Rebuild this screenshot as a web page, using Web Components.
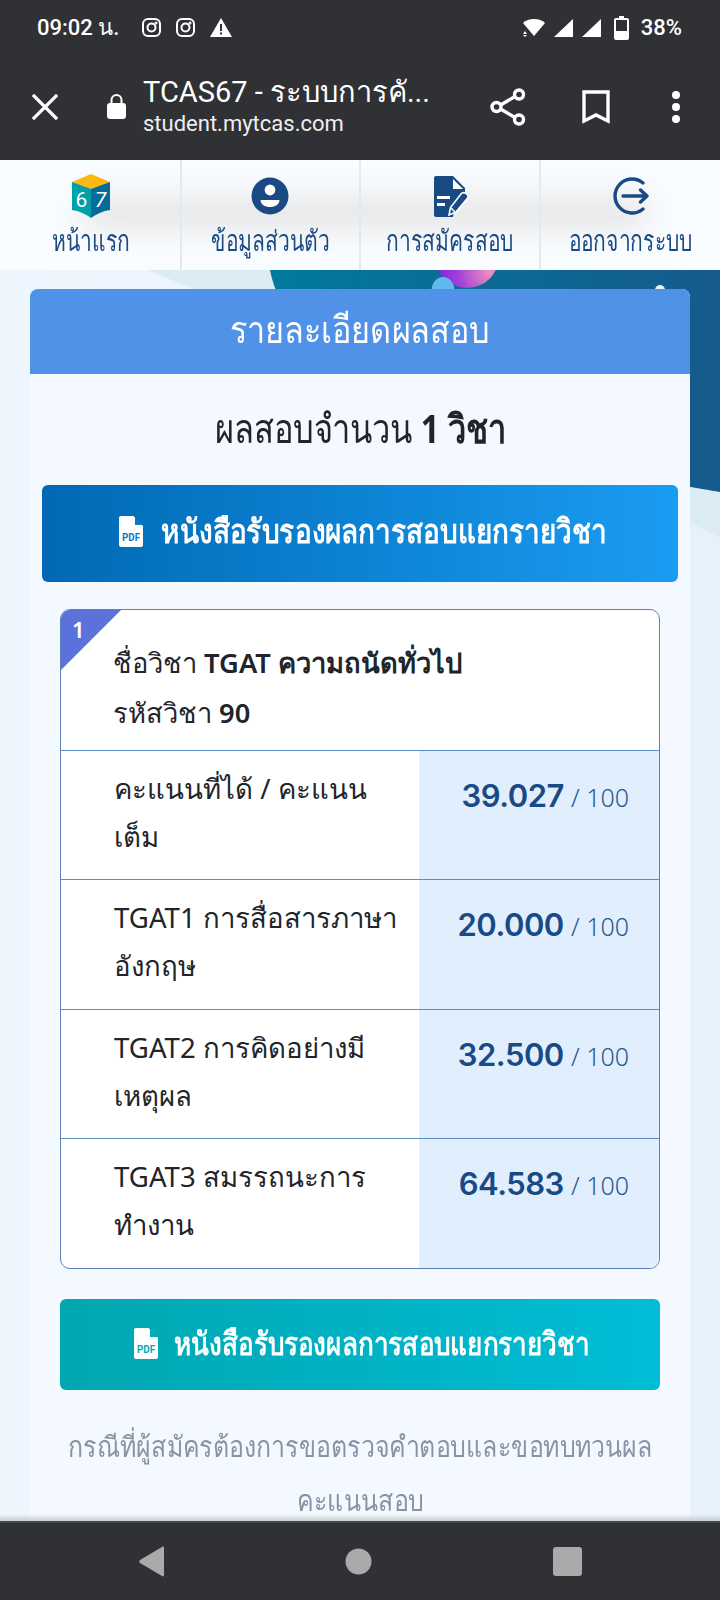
<!DOCTYPE html>
<html lang="th">
<head>
<meta charset="utf-8">
<title>TCAS67</title>
<style>
  html, body { margin: 0; padding: 0; }
  body { width: 720px; height: 1600px; overflow: hidden; display: flex; flex-direction: column; font-family: "Noto Sans", sans-serif; background: #303135; }
</style>
</head>
<body>
<phone-top></phone-top>
<nav-tabs>
  <nav-tab label="หน้าแรก" icon="book"></nav-tab>
  <nav-tab label="ข้อมูลส่วนตัว" icon="user"></nav-tab>
  <nav-tab label="การสมัครสอบ" icon="form"></nav-tab>
  <nav-tab label="ออกจากระบบ" icon="logout"></nav-tab>
</nav-tabs>
<page-body>
  <result-card heading="รายละเอียดผลสอบ">
    <h-count>ผลสอบจำนวน <b>1 วิชา</b></h-count>
    <pdf-button kind="blue">หนังสือรับรองผลการสอบแยกรายวิชา</pdf-button>
    <score-table no="1" subject="TGAT ความถนัดทั่วไป" code="90">
      <score-row score="39.027">คะแนนที่ได้ / คะแนน<br>เต็ม</score-row>
      <score-row score="20.000">TGAT1 การสื่อสารภาษา<br>อังกฤษ</score-row>
      <score-row score="32.500">TGAT2 การคิดอย่างมี<br>เหตุผล</score-row>
      <score-row score="64.583">TGAT3 สมรรถนะการ<br>ทำงาน</score-row>
    </score-table>
    <pdf-button kind="teal">หนังสือรับรองผลการสอบแยกรายวิชา</pdf-button>
    <foot-note>
      <span>กรณีที่ผู้สมัครต้องการขอตรวจคำตอบและขอทบทวนผล</span>
      <span>คะแนนสอบ</span>
    </foot-note>
  </result-card>
</page-body>
<phone-nav></phone-nav>

<script>
const ICONS = {
  book: `<svg width="38" height="44" viewBox="0 0 38 44">
    <path d="M19 0 38 8 19 16 0 8Z" fill="#fdb813"/>
    <path d="M0 8 19 15V44C14 40 7 37 0 36Z" fill="#00a0a8"/>
    <path d="M38 8 19 15V44C24 40 31 37 38 36Z" fill="#046b9c"/>
    <text x="9.500" y="33" font-size="21" font-family="Roboto" fill="#fff" text-anchor="middle">6</text>
    <text x="28.500" y="33" font-size="21" font-family="Roboto" font-style="italic" fill="#fff" text-anchor="middle">7</text>
  </svg>`,
  user: `<svg width="38" height="38" viewBox="0 0 38 38">
    <circle cx="19" cy="19" r="18.5" fill="#1a4a84"/>
    <circle cx="19" cy="13" r="5.400" fill="#fff"/>
    <path d="M9.500 23h19c0 4.600-4.600 7-9.500 7s-9.500-2.400-9.500-7Z" fill="#fff"/>
  </svg>`,
  form: `<svg width="36" height="41" viewBox="0 0 36 41" style="margin-left:5px">
    <path d="M2 0H19L31 12V20L20 34 19 41H2A2 2 0 0 1 0 39V2A2 2 0 0 1 2 0Z" fill="#1a4a84"/>
    <path d="M19 3 29 13H19Z" fill="#fff"/>
    <path d="M3 20H16V23H3ZM3 27H11V30H3Z" fill="#fff"/>
    <path d="M15 39 16.500 31.500 27 18C29.500 15 35 18 34 21.500L22 36Z" fill="#1a4a84" stroke="#fff" stroke-width="1.600"/>
    <path d="M17 32 21 36" stroke="#fff" stroke-width="1.600"/>
  </svg>`,
  logout: `<svg width="38" height="38" viewBox="0 0 38 38" fill="none" stroke="#1a4a84" stroke-width="3.400" stroke-linecap="round" stroke-linejoin="round">
    <path d="M32 6A17 17 0 1 0 32 32"/>
    <path d="M12 19H36M29.500 13 36 19 29.500 25"/>
  </svg>`
};

const PDF = color => `<svg width="24" height="31" viewBox="0 0 24 31">
  <path d="M2 0H14.500L24 10V29A2 2 0 0 1 22 31H2A2 2 0 0 1 0 29V2A2 2 0 0 1 2 0Z" fill="#fff"/>
  <path d="M16 1 23.500 9H16Z" fill="${color}"/>
  <text x="12" y="25" font-size="11" font-weight="700" font-family="Roboto" fill="${color}" text-anchor="middle" textLength="18" lengthAdjust="spacingAndGlyphs">PDF</text>
</svg>`;

class PhoneTop extends HTMLElement {
  connectedCallback() {
    this.attachShadow({ mode: 'open' });
    this.shadowRoot.innerHTML = `
      <style>
        :host { display: block; background: #303135; color: #fff; height: 160px; flex: none; }
        .status { height: 53px; box-sizing: border-box; padding: 2px 38px 0 37px; display: flex; align-items: center; font-family: Roboto, sans-serif; font-size: 22px; font-weight: 500; }
        .status .time { margin-right: 8px; white-space: nowrap; }
        .left { display: flex; align-items: center; gap: 15px; flex: 1; }
        .right { display: flex; align-items: center; }
        .bar { height: 107px; display: flex; align-items: center; padding: 0 0 0 32px; }
        .close { margin-right: 49px; display: flex; }
        .lock { margin-right: 17px; display: flex; }
        .titles { width: 300px; margin-right: 47px; margin-top: 2px; }
        .t1 { font-size: 29px; line-height: 36px; font-family: Roboto, "Noto Sans", sans-serif; white-space: nowrap; margin-top: -4px; }
        .t2 { font-size: 22px; line-height: 28px; font-family: Roboto, sans-serif; color: #eee; white-space: nowrap; }
        .acts { display: flex; align-items: center; }
      </style>
      <div class="status">
        <div class="left">
          <span class="time">09:02 น.</span>
          <svg width="19" height="19" viewBox="0 0 19 19" fill="none" stroke="#fff" stroke-width="2"><rect x="1" y="1" width="17" height="17" rx="5"/><circle cx="9.500" cy="9.500" r="4"/><circle cx="14" cy="5" r=".6"/></svg>
          <svg width="19" height="19" viewBox="0 0 19 19" fill="none" stroke="#fff" stroke-width="2"><rect x="1" y="1" width="17" height="17" rx="5"/><circle cx="9.500" cy="9.500" r="4"/><circle cx="14" cy="5" r=".6"/></svg>
          <svg width="22" height="19" viewBox="0 0 22 19"><path d="M11 0 22 19H0Z" fill="#fff"/><path d="M10 6h2v7h-2ZM10 14.500h2v2h-2Z" fill="#303135"/></svg>
        </div>
        <div class="right">
          <svg width="24" height="19" viewBox="0 0 24 19" style="margin-right:8px"><path d="M1 5C6-.5 18-.5 23 5L12 18 9 14.500Z" fill="#fff"/><path d="M3 13 5 16H1ZM3 19 1 17H5Z" fill="#fff"/></svg>
          <svg width="19" height="18" viewBox="0 0 19 18" style="margin-right:9px"><path d="M19 0V18H0Z" fill="#fff"/></svg>
          <svg width="19" height="18" viewBox="0 0 19 18" style="margin-right:13px"><path d="M19 0V18H0Z" fill="#fff"/></svg>
          <svg width="15" height="24" viewBox="0 0 15 24" style="margin-right:12px"><path d="M5 0h5v2h3a2 2 0 0 1 2 2v18a2 2 0 0 1-2 2H2a2 2 0 0 1-2-2V4a2 2 0 0 1 2-2h3Z" fill="#fff"/><rect x="2" y="4" width="11" height="11" fill="#303135"/></svg>
          <span>38%</span>
        </div>
      </div>
      <div class="bar">
        <span class="close"><svg width="26" height="26" viewBox="0 0 26 26" stroke="#fff" stroke-width="3.200" stroke-linecap="square"><path d="M2 2 24 24M24 2 2 24"/></svg></span>
        <span class="lock"><svg width="19" height="25" viewBox="0 0 19 25"><path d="M4.500 10V6a5 5 0 0 1 10 0v4" fill="none" stroke="#fff" stroke-width="2"/><rect y="9" width="19" height="16" rx="3" fill="#fff"/></svg></span>
        <div class="titles">
          <div class="t1">TCAS67 - ระบบการคั...</div>
          <div class="t2">student.mytcas.com</div>
        </div>
        <div class="acts">
          <svg width="36" height="38" viewBox="0 0 36 38" fill="none" stroke="#fff" stroke-width="3.400" style="margin-right:56px"><circle cx="6.500" cy="19" r="4.500"/><circle cx="29" cy="6.500" r="4.500"/><circle cx="29" cy="31.500" r="4.500"/><path d="M10.500 17 25 8.500M10.500 21 25 29.500"/></svg>
          <svg width="28" height="34" viewBox="0 0 28 34" fill="none" stroke="#fff" stroke-width="3.400" style="margin-right:61px"><path d="M2 2H26V31L14 25 2 31Z"/></svg>
          <svg width="10" height="34" viewBox="0 0 10 34" fill="#fff"><circle cx="5" cy="5" r="4"/><circle cx="5" cy="17" r="4"/><circle cx="5" cy="29" r="4"/></svg>
        </div>
      </div>`;
  }
}

class NavTabs extends HTMLElement {
  connectedCallback() {
    this.attachShadow({ mode: 'open' });
    this.shadowRoot.innerHTML = `
      <style>
        :host { display: flex; flex: none; height: 110px; background: #fafdff; padding-left: 2px; box-sizing: border-box; position: relative; z-index: 2; overflow: hidden; }
        .glow { position: absolute; left: 80px; right: 70px; top: 38px; height: 30px; background: #e2e2e2; filter: blur(16px); border-radius: 15px; }
      </style>
      <div class="glow"></div>
      <slot></slot>`;
  }
}

class NavTab extends HTMLElement {
  connectedCallback() {
    this.attachShadow({ mode: 'open' });
    this.shadowRoot.innerHTML = `
      <style>
        :host { display: flex; flex-direction: column; align-items: center; width: 180px; box-sizing: border-box; border-right: 2px solid #e6e9ec; padding-top: 14px; position: relative; }
        :host(:last-child) { border-right: 0; }
        .ic { height: 44px; display: flex; align-items: center; }
        .lb { margin-top: 4px; font-size: 29px; line-height: 36px; color: #1a4a84; white-space: nowrap; transform: scaleX(.725); }
      </style>
      <div class="ic">${ICONS[this.getAttribute('icon')]}</div>
      <div class="lb">${this.getAttribute('label')}</div>`;
  }
}

class PageBody extends HTMLElement {
  connectedCallback() {
    this.attachShadow({ mode: 'open' });
    this.shadowRoot.innerHTML = `
      <style>
        :host { display: block; flex: 1; min-height: 0; position: relative; overflow: hidden; background: linear-gradient(90deg, #eef6fe, #e6f1fb); padding: 19px 30px 0; }
        .deco { position: absolute; left: 0; top: 0; }
        .fade { position: absolute; left: 0; right: 0; bottom: 0; height: 7px; background: linear-gradient(#e8ebee00, #c9ccd0); z-index: 3; }
        .in { position: relative; }
      </style>
      <svg class="deco" width="720" height="300" viewBox="0 0 720 300">
        <defs>
          <linearGradient id="deep" x1="0" y1="0" x2="1" y2="0">
            <stop offset="0" stop-color="#017a9e"/><stop offset="1" stop-color="#155a8c"/>
          </linearGradient>
          <radialGradient id="orb" cx=".85" cy=".75" r=".9">
            <stop offset="0" stop-color="#f090c0"/><stop offset=".55" stop-color="#a040d8"/><stop offset="1" stop-color="#7a20e0"/>
          </radialGradient>
        </defs>
        <path d="M147 0H720V267C500 165 300 60 147 0Z" fill="#dcecf5"/>
        <path d="M270 0H720V222C690 216 300 160 270 0Z" fill="url(#deep)"/>
        <circle cx="467" cy="-14" r="32" fill="url(#orb)"/>
        <ellipse cx="443" cy="21" rx="11.500" ry="14" fill="#5fb8f0"/>
        <circle cx="660" cy="20" r="5" fill="#e8f0f8"/>
      </svg>
      <div class="in"><slot></slot></div>
      <div class="fade"></div>`;
  }
}

class ResultCard extends HTMLElement {
  connectedCallback() {
    this.attachShadow({ mode: 'open' });
    this.shadowRoot.innerHTML = `
      <style>
        :host { display: block; background: #f4f9ff; border-radius: 8px 8px 0 0; overflow: hidden; height: 1300px; }
        .head { height: 85px; box-sizing: border-box; padding-bottom: 6px; background: #4f92e8; color: #fff; line-height: 79px; text-align: center; }
        .head span { display: inline-block; font-size: 38px; transform: scaleX(.853); white-space: nowrap; }
      </style>
      <div class="head"><span>${this.getAttribute('heading')}</span></div>
      <slot></slot>`;
  }
}

class HCount extends HTMLElement {
  connectedCallback() {
    this.attachShadow({ mode: 'open' });
    this.shadowRoot.innerHTML = `
      <style>
        :host { display: block; height: 111px; line-height: 107px; text-align: center; color: #212529; }
        span { display: inline-block; font-size: 40px; transform: scaleX(.816); white-space: nowrap; }
      </style>
      <span><slot></slot></span>`;
  }
}

class PdfButton extends HTMLElement {
  connectedCallback() {
    this.attachShadow({ mode: 'open' });
    const blue = this.getAttribute('kind') === 'blue';
    this.shadowRoot.innerHTML = `
      <style>
        :host { display: flex; align-items: center; justify-content: center; gap: 18px; box-sizing: border-box; padding-left: 5px; color: #fff; border-radius: 6px; font-weight: 600; white-space: nowrap; }
        :host([kind=blue]) { margin: 0 12px 27px; height: 97px; padding-bottom: 4px; background: linear-gradient(90deg, #0069b4, #1a9cf2); }
        :host([kind=teal]) { margin: 30px 30px 0; height: 91px; padding-bottom: 2px; gap: 16px; background: linear-gradient(90deg, #00a7b1, #00bdd6); }
        span { display: inline-block; transform-origin: left center; }
        :host([kind=blue]) span { width: 445px; font-size: 33px; transform: scaleX(.846); }
        :host([kind=teal]) span { width: 418px; font-size: 32px; transform: scaleX(.815); }
      </style>
      ${PDF(blue ? '#0a78c8' : '#00aab8')}
      <span><slot></slot></span>`;
  }
}

class ScoreTable extends HTMLElement {
  connectedCallback() {
    this.attachShadow({ mode: 'open' });
    this.shadowRoot.innerHTML = `
      <style>
        :host { display: block; margin: 0 30px; background: #fff; border: 1px solid #5b7fc0; border-radius: 10px; overflow: hidden; position: relative; }
        .no { position: absolute; left: 0; top: 0; width: 60px; height: 60px; background: #5a72da; clip-path: polygon(0 0, 100% 0, 0 100%); }
        .n { position: absolute; left: 11px; top: 4px; color: #fff; font-size: 22px; font-weight: 600; line-height: 30px; }
        .head { height: 140px; box-sizing: border-box; padding: 28px 20px 0 52px; font-size: 27.300px; line-height: 50px; color: #212529; }
        b { font-weight: 600; }
      </style>
      <div class="no"></div>
      <div class="n">${this.getAttribute('no')}</div>
      <div class="head">
        <div>ชื่อวิชา <b>${this.getAttribute('subject')}</b></div>
        <div>รหัสวิชา <b>${this.getAttribute('code')}</b></div>
      </div>
      <slot></slot>`;
  }
}

class ScoreRow extends HTMLElement {
  connectedCallback() {
    this.attachShadow({ mode: 'open' });
    this.shadowRoot.innerHTML = `
      <style>
        :host { display: grid; grid-template-columns: 358px 1fr; border-top: 1px solid #5a8cc0; height: 129.400px; box-sizing: border-box; }
        .l { padding: 13px 0 0 53px; font-size: 27.600px; line-height: 48px; color: #212529; white-space: nowrap; }
        .r { background: #e1eefd; padding: 20px 30px 0 0; text-align: right; color: #1a4a84; line-height: 50px; white-space: nowrap; }
        .r b { font-family: Inter, sans-serif; font-size: 31px; font-weight: 600; letter-spacing: -.5px; margin-right: 3px; }
        .r span { color: #2a5a90; font-size: 25px; font-weight: 300; }
      </style>
      <div class="l"><slot></slot></div>
      <div class="r"><b>${this.getAttribute('score')}</b> <span>/ 100</span></div>`;
  }
}

class FootNote extends HTMLElement {
  connectedCallback() {
    this.attachShadow({ mode: 'open' });
    this.shadowRoot.innerHTML = `
      <style>
        :host { display: flex; flex-direction: column; align-items: center; margin-top: 29px; color: #8a93a6; font-size: 29px; line-height: 54px; white-space: nowrap; }
        ::slotted(span) { display: block; transform: scaleX(.86); }
      </style>
      <slot></slot>`;
  }
}

class PhoneNav extends HTMLElement {
  connectedCallback() {
    this.attachShadow({ mode: 'open' });
    this.shadowRoot.innerHTML = `
      <style>
        :host { display: flex; flex: none; height: 79px; background: #303135; border-top: 2px solid #44464a; box-sizing: border-box; align-items: center; justify-content: space-between; padding: 0 138px 0 139px; }
      </style>
      <svg width="25" height="31" viewBox="0 0 25 31"><path d="M23 1C24 0 25 1 25 2V29C25 30 24 31 23 30L1 17C0 16 0 15 1 14Z" fill="#aaa"/></svg>
      <svg width="27" height="27" viewBox="0 0 27 27"><circle cx="13.500" cy="13.500" r="13" fill="#aaa"/></svg>
      <svg width="29" height="29" viewBox="0 0 29 29"><rect width="29" height="29" rx="3" fill="#aaa"/></svg>`;
  }
}

customElements.define('phone-top', PhoneTop);
customElements.define('nav-tabs', NavTabs);
customElements.define('nav-tab', NavTab);
customElements.define('page-body', PageBody);
customElements.define('result-card', ResultCard);
customElements.define('h-count', HCount);
customElements.define('pdf-button', PdfButton);
customElements.define('score-table', ScoreTable);
customElements.define('score-row', ScoreRow);
customElements.define('foot-note', FootNote);
customElements.define('phone-nav', PhoneNav);
</script>
</body>
</html>
